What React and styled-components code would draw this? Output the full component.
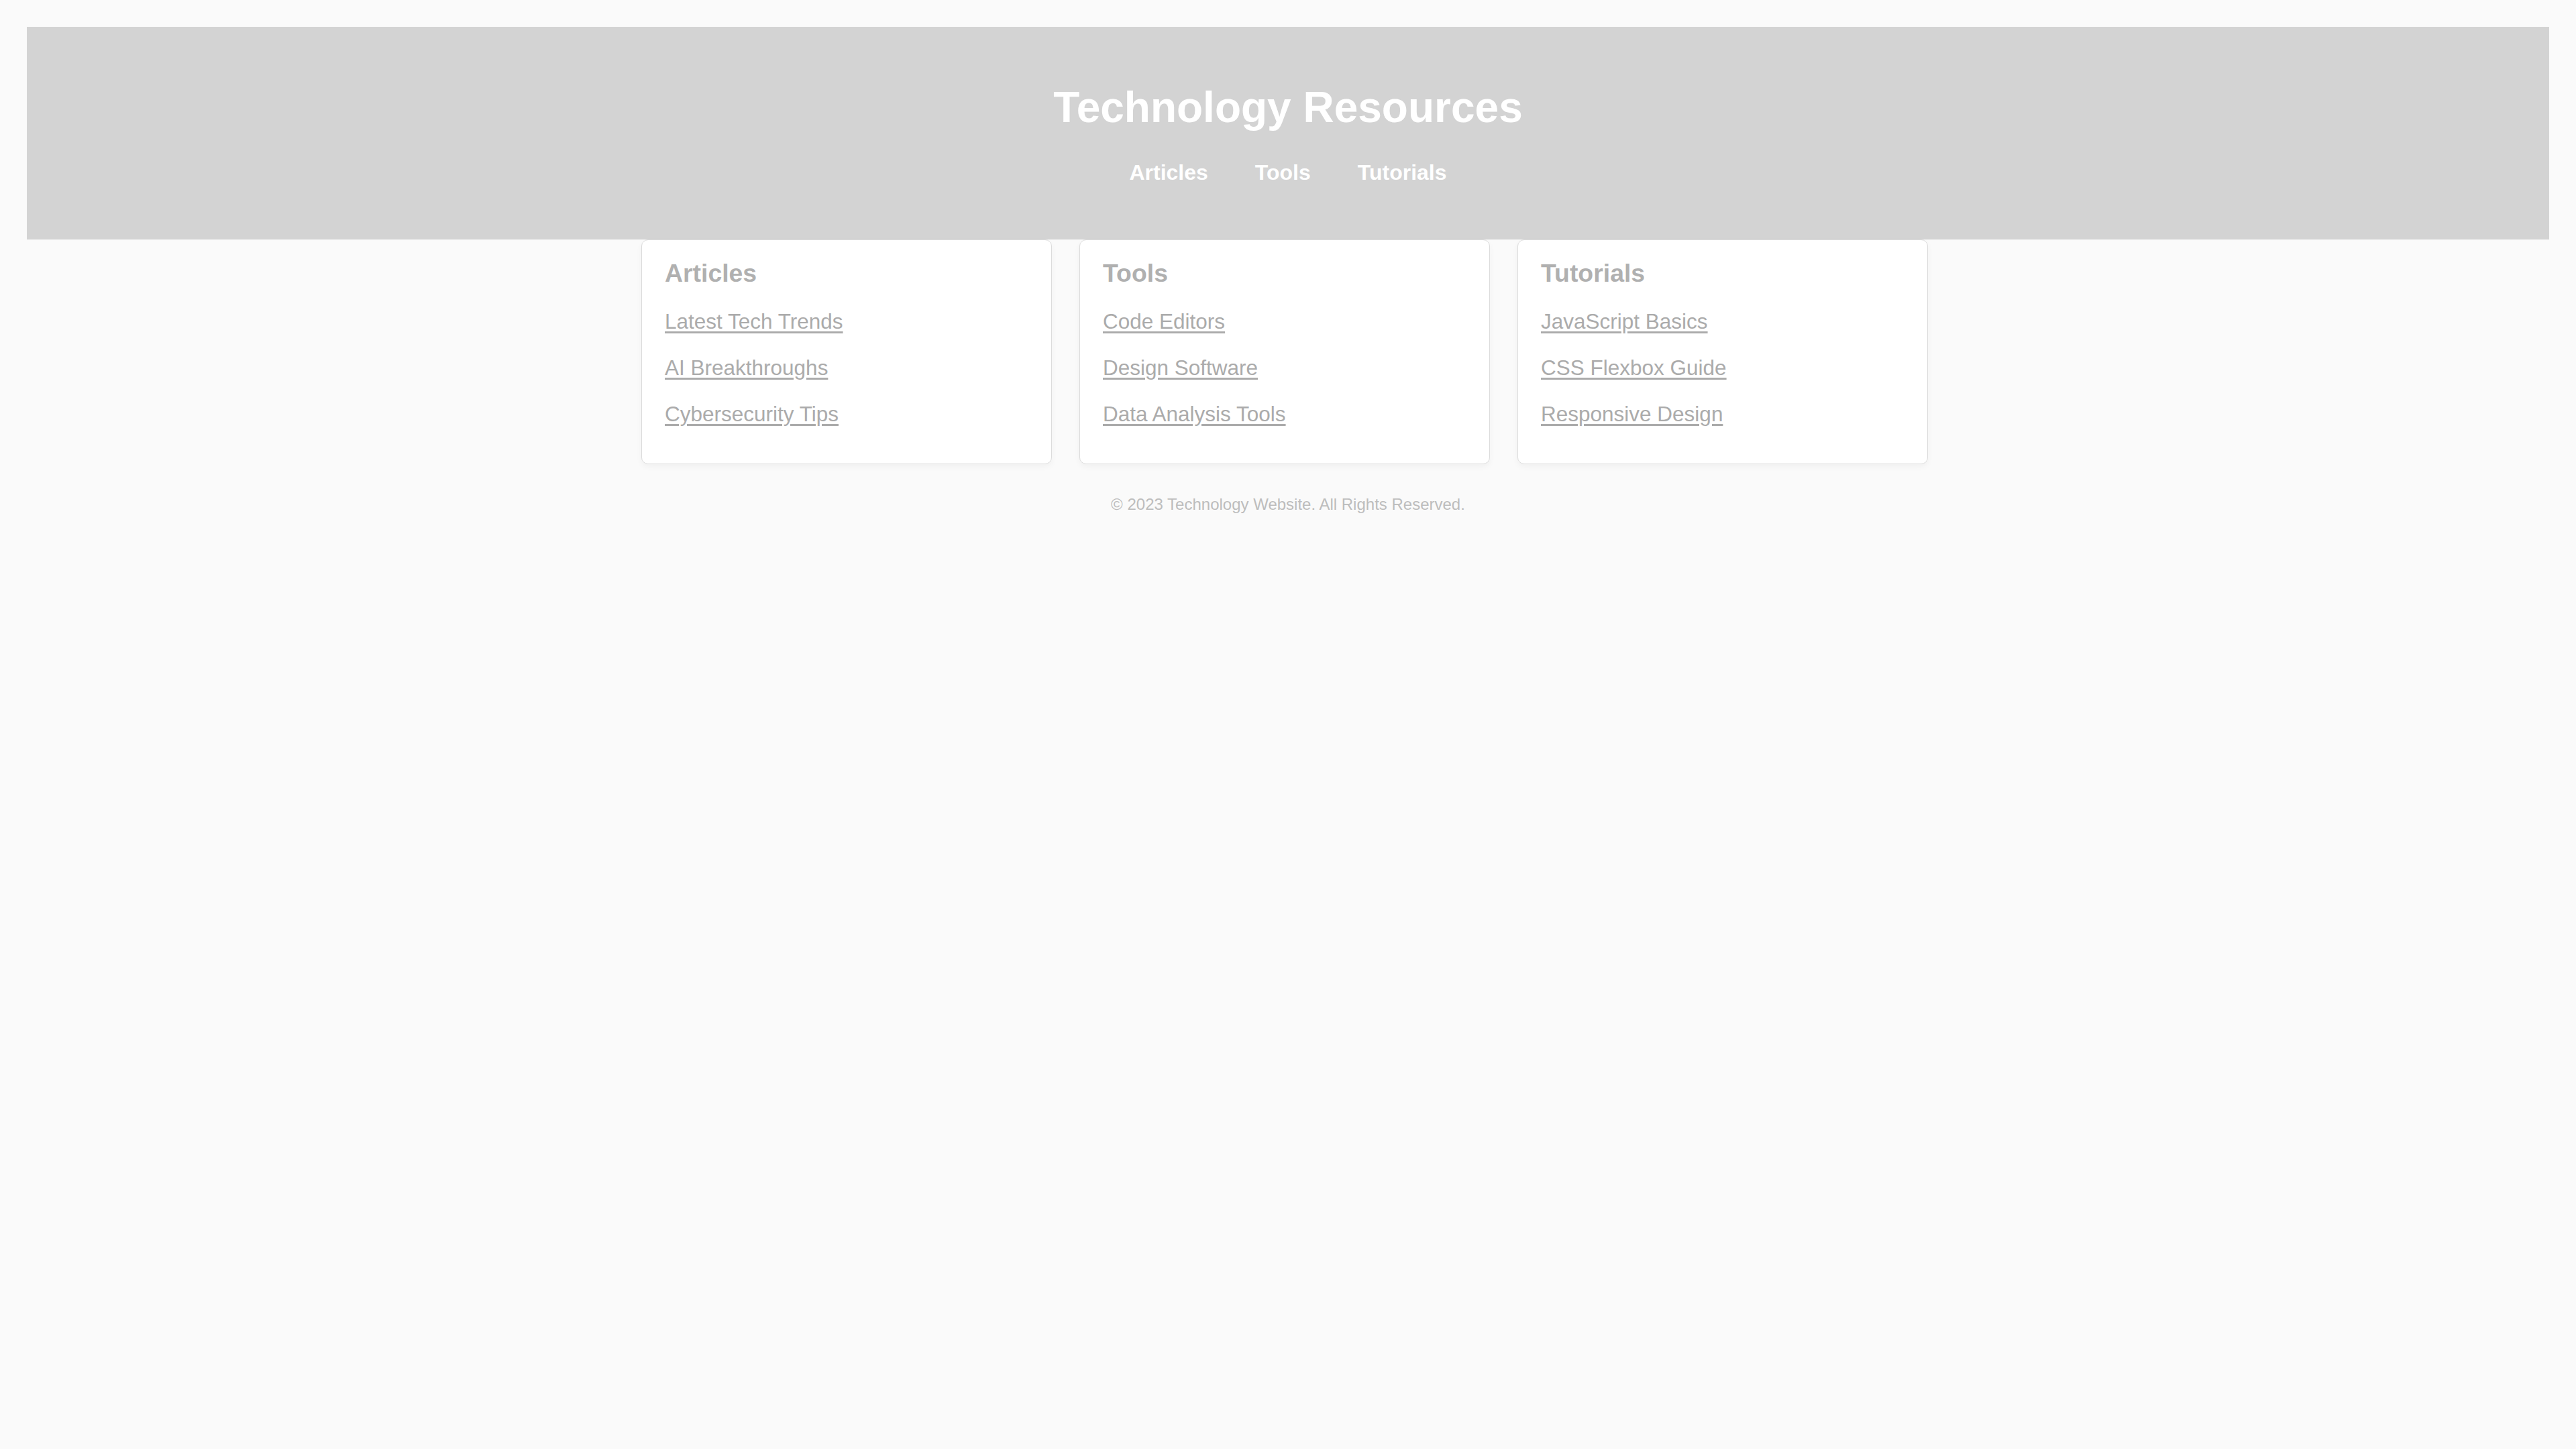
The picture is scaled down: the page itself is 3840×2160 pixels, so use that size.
import React from 'react';
import styled, { createGlobalStyle } from 'styled-components';

const GlobalStyle = createGlobalStyle`
    html, body {
        margin: 0;
        padding: 0;
        background: #fafafa;
        font-family: "Liberation Sans", Arial, sans-serif;
    }
`;

const Page = styled.div`
    min-height: 2160px;
    padding: 40px 40px 0;
    box-sizing: border-box;
`;

const Header = styled.header`
    background: #d3d3d3;
    height: 317px;
    box-sizing: border-box;
    padding-top: 83px;
    display: flex;
    flex-direction: column;
    align-items: center;
`;

const Title = styled.h1`
    margin: 0 0 42px;
    font-size: 64px;
    line-height: 74px;
    font-weight: bold;
    color: #ffffff;
`;

const Nav = styled.nav`
    display: flex;
    gap: 70px;
`;

const NavLink = styled.a`
    font-size: 32px;
    line-height: 37px;
    font-weight: bold;
    color: #ffffff;
    text-decoration: none;
`;

const Main = styled.main`
    width: 1918px;
    margin: 0 0 0 calc(50% - 964px);
    display: grid;
    grid-template-columns: repeat(3, 1fr);
    gap: 41px;
`;

const Card = styled.section`
    background: #ffffff;
    border: 1px solid #dcdcdc;
    border-radius: 10px;
    box-shadow: 0 4px 10px rgba(0, 0, 0, 0.04);
    height: 335px;
    box-sizing: border-box;
    padding: 28px 34px 0;
`;

const CardTitle = styled.h3`
    margin: 0 0 32px;
    font-size: 37.4px;
    line-height: 43px;
    font-weight: bold;
    color: #b0b0b0;
`;

const LinkList = styled.ul`
    list-style: none;
    margin: 0;
    padding: 0;
    display: flex;
    flex-direction: column;
    gap: 32px;
`;

const ItemLink = styled.a`
    font-size: 31.5px;
    line-height: 37px;
    color: #ababab;
    text-decoration: underline;
    text-underline-offset: 4px;
`;

const Footer = styled.footer`
    margin-top: 46px;
    text-align: center;
    font-size: 24px;
    line-height: 28px;
    color: #bdbdbd;
`;

const sections = [
    { title: 'Articles', links: ['Latest Tech Trends', 'AI Breakthroughs', 'Cybersecurity Tips'] },
    { title: 'Tools', links: ['Code Editors', 'Design Software', 'Data Analysis Tools'] },
    { title: 'Tutorials', links: ['JavaScript Basics', 'CSS Flexbox Guide', 'Responsive Design'] },
];

export default class App extends React.Component {
    render() {
        return (
            <Page>
                <GlobalStyle />
                <Header>
                    <Title>Technology Resources</Title>
                    <Nav>
                        {sections.map(s => (
                            <NavLink key={s.title} href="#">{s.title}</NavLink>
                        ))}
                    </Nav>
                </Header>

                <Main>
                    {sections.map(s => (
                        <Card key={s.title}>
                            <CardTitle>{s.title}</CardTitle>
                            <LinkList>
                                {s.links.map(l => (
                                    <li key={l}><ItemLink href="#">{l}</ItemLink></li>
                                ))}
                            </LinkList>
                        </Card>
                    ))}
                </Main>

                <Footer>© 2023 Technology Website. All Rights Reserved.</Footer>
            </Page>
        )
    }
}
